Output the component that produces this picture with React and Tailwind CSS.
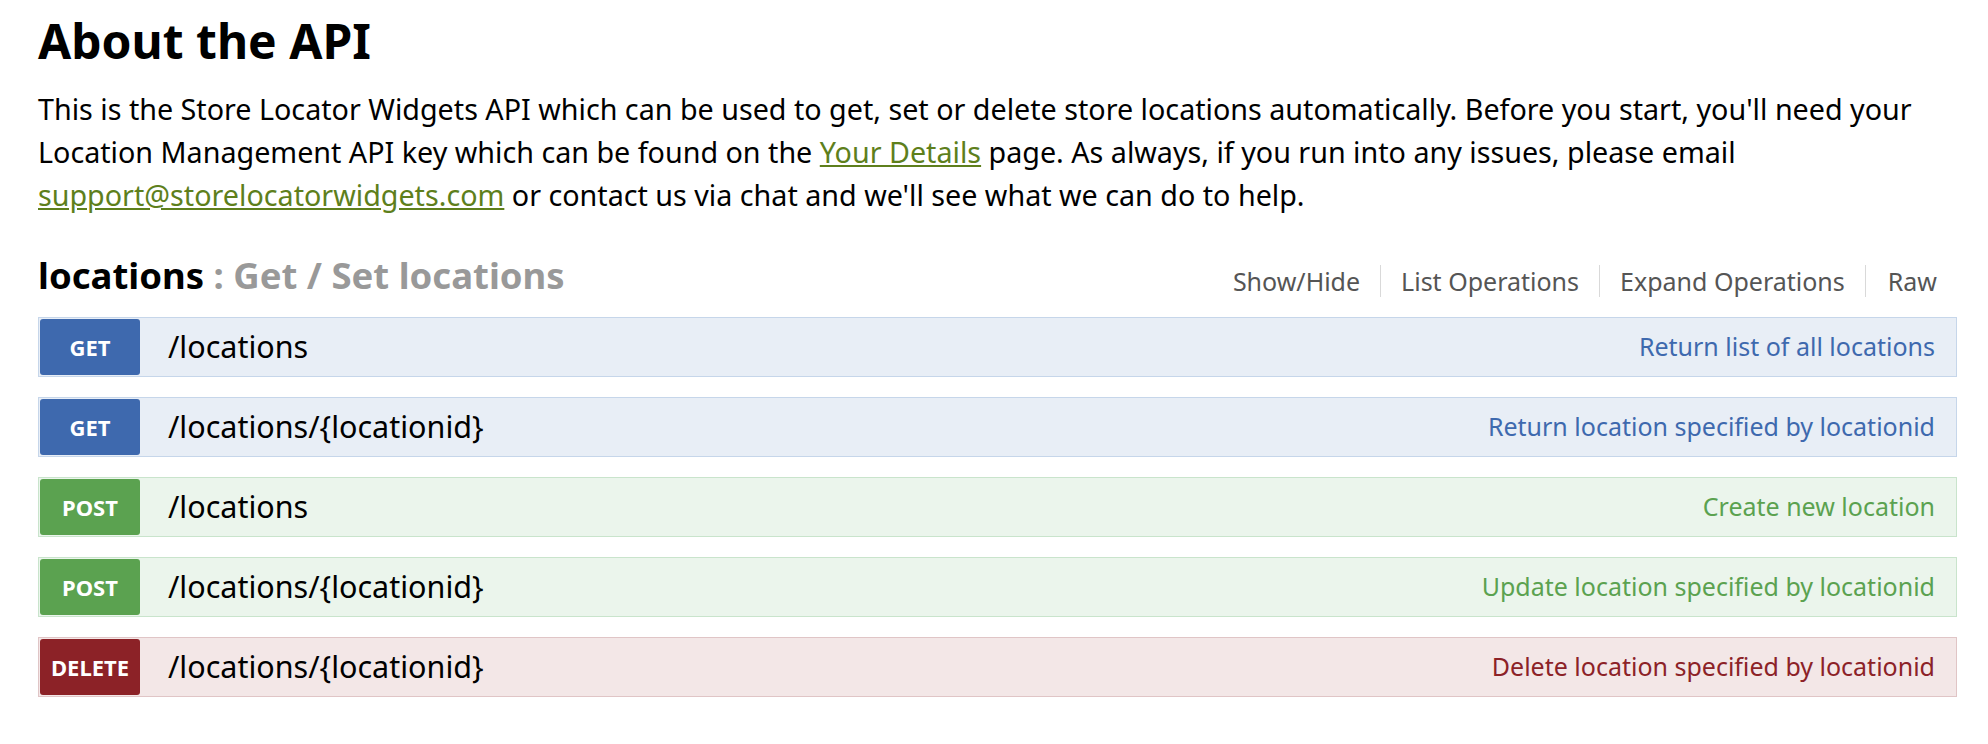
const ops = [
  {
    method: "GET",
    path: "/locations",
    summary: "Return list of all locations",
    row: "bg-[#e8eef6] border-[#c6d6ea]",
    badge: "bg-[#3e69ae]",
    text: "text-[#3e69ae]",
  },
  {
    method: "GET",
    path: "/locations/{locationid}",
    summary: "Return location specified by locationid",
    row: "bg-[#e8eef6] border-[#c6d6ea]",
    badge: "bg-[#3e69ae]",
    text: "text-[#3e69ae]",
  },
  {
    method: "POST",
    path: "/locations",
    summary: "Create new location",
    row: "bg-[#ebf5ec] border-[#c9e4cc]",
    badge: "bg-[#5ba250]",
    text: "text-[#5ba250]",
  },
  {
    method: "POST",
    path: "/locations/{locationid}",
    summary: "Update location specified by locationid",
    row: "bg-[#ebf5ec] border-[#c9e4cc]",
    badge: "bg-[#5ba250]",
    text: "text-[#5ba250]",
  },
  {
    method: "DELETE",
    path: "/locations/{locationid}",
    summary: "Delete location specified by locationid",
    row: "bg-[#f3e7e7] border-[#e0c5c6]",
    badge: "bg-[#8c2227]",
    text: "text-[#8c2227]",
  },
];

const links = ["Show/Hide", "List Operations", "Expand Operations", "Raw"];

export default function App() {
  return (
    <div className="min-h-screen bg-white pl-[38px] pr-[31px] pt-[13px] font-['Noto_Sans','Open_Sans',sans-serif] text-black">
      <h1 className="text-[48px] font-bold leading-[56px]">About the API</h1>
      <p className="mt-[18px] text-[28.7px] leading-[43px]">
        This is the Store Locator Widgets API which can be used to get, set or delete store locations automatically. Before you start, you'll need your Location Management API key which can be found on the{" "}
        <a href="#" className="text-[#5e7f1c] underline">Your Details</a> page. As always, if you run into any issues, please email{" "}
        <a href="#" className="text-[#5e7f1c] underline">support@storelocatorwidgets.com</a> or contact us via chat and we'll see what we can do to help.
      </p>

      {/* resource header */}
      <div className="mt-[35px] flex items-center justify-between">
        <h2 className="text-[36.5px] font-bold leading-[48px]">
          locations <span className="text-[#999999]">: Get / Set locations</span>
        </h2>
        <ul className="flex items-center pt-[12px] pr-[20px] text-[25px] text-[#555555]">
          {links.map((l, i) => (
            <li key={l} className={i === 0 ? "pr-[20px] leading-[32px]" : "border-l border-[#d9d9d9] pl-[20px] pr-[20px] last:pl-[22px] last:pr-0 leading-[32px]"}>
              {l}
            </li>
          ))}
        </ul>
      </div>

      {/* operations */}
      <div className="mt-[18px] flex flex-col gap-[20px]">
        {ops.map((op, i) => (
          <div key={i} className={`flex h-[60px] items-center border p-[1px] ${op.row}`}>
            <span className={`flex h-[56px] w-[100px] shrink-0 items-center justify-center rounded-[3px] text-[22px] font-bold text-white ${op.badge}`}>
              {op.method}
            </span>
            <span className="ml-[28px] text-[30.5px]">{op.path}</span>
            <span className={`ml-auto pr-[20px] text-[25px] ${op.text}`}>{op.summary}</span>
          </div>
        ))}
      </div>
    </div>
  );
}
